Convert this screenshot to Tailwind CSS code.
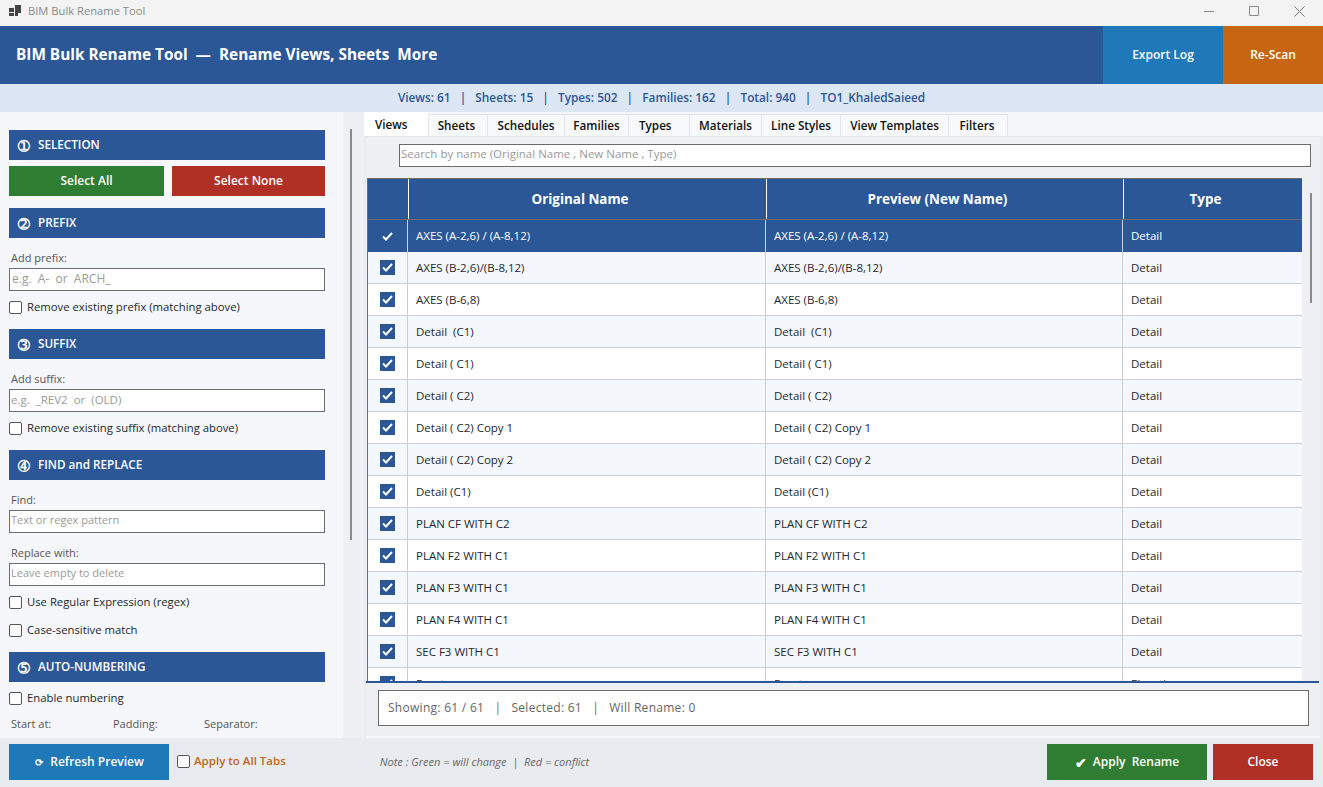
<!DOCTYPE html>
<html>
<head>
<meta charset="utf-8">
<title>BIM Bulk Rename Tool</title>
<script src="https://cdn.jsdelivr.net/npm/@tailwindcss/browser@4"></script>
</head>
<body class="h-screen overflow-hidden bg-[#e8ecf1] font-['Open_Sans',sans-serif] text-[11.5px] text-[#24272d]">
<div class="flex h-[787px] flex-col">

	<!-- title bar -->
	<div class="flex h-[26px] items-center bg-[#f3f3f3] pb-[4px] pl-[9px]">
		<svg width="13" height="12" viewBox="0 0 13 12" class="fill-[#444]"><rect x="0" y="3" width="5" height="4"/><rect x="0" y="8" width="5" height="3"/><rect x="6" y="5" width="3" height="6" /><rect x="6" y="0" width="6" height="8"/></svg>
		<span class="ml-[6px] text-[11.2px] text-[#8a8a8a]">BIM Bulk Rename Tool</span>
		<div class="ml-auto flex items-center gap-[35px] pr-[18px]">
			<div class="h-px w-[10px] bg-[#8a8a8a]"></div>
			<div class="h-[10px] w-[10px] rounded-[1px] border border-[#8a8a8a]"></div>
			<svg width="11" height="11" viewBox="0 0 11 11" class="stroke-[#777]"><path d="M0.5 0.5 L10.5 10.5 M10.5 0.5 L0.5 10.5" fill="none"/></svg>
		</div>
	</div>

	<!-- header -->
	<div class="flex h-[58px] items-stretch bg-[#2b5797] text-white">
		<div class="flex flex-1 items-center pl-4 text-[15.35px] font-bold whitespace-pre">BIM Bulk Rename Tool  —  Rename Views, Sheets  More</div>
		<div class="flex w-[120px] items-center justify-center bg-[#1f78b8] text-[12px] font-semibold">Export Log</div>
		<div class="flex w-[100px] items-center justify-center bg-[#c66512] text-[12px] font-semibold">Re-Scan</div>
	</div>

	<!-- stats -->
	<div class="flex h-7 items-center justify-center bg-[#dde6f5] text-[11.8px] font-semibold whitespace-pre text-[#2b5797]">Views: 61   |   Sheets: 15   |   Types: 502   |   Families: 162   |   Total: 940   |   TO1_KhaledSaieed</div>

	<div class="flex min-h-0 flex-1">
		<!-- left panel -->
		<div class="relative w-[364px] shrink-0 overflow-hidden bg-[#eef0f3]">
			<div class="h-full w-[343px] overflow-hidden bg-[#f5f7fb] pt-[18px] pl-[9px]">
				<div class="flex w-[316px] flex-col">
					<div class="flex h-[30px] items-center gap-[8px] bg-[#2b5797] pl-[9px] text-[11.7px] font-semibold text-white"><span class="text-[14px]">➀</span>SELECTION</div>
					<div class="mt-[6px] flex gap-2">
						<div class="flex h-[30px] w-[155px] items-center justify-center bg-[#2e7d32] text-[12px] font-semibold text-white">Select All</div>
						<div class="flex h-[30px] w-[153px] items-center justify-center bg-[#b03026] text-[12px] font-semibold text-white">Select None</div>
					</div>

					<div class="mt-3 flex h-[30px] items-center gap-[8px] bg-[#2b5797] pl-[9px] text-[11.7px] font-semibold text-white"><span class="text-[14px]">➁</span>PREFIX</div>
					<div class="mt-[13px] h-[17px] pl-[2px] text-[11px] leading-[13px] text-[#555]">Add prefix:</div>
					<div class="flex h-[23px] items-center border border-[#6b6b6b] bg-white pb-[2px] pl-[2px] text-[12px] whitespace-pre text-[#9a9a9a]">e.g.  A-  or  ARCH_</div>
					<label class="mt-[6px] flex h-5 items-center gap-[5px] text-[11.3px]"><span class="h-[13px] w-[13px] rounded-[2px] border border-[#555] bg-white"></span>Remove existing prefix (matching above)</label>

					<div class="mt-3 flex h-[30px] items-center gap-[8px] bg-[#2b5797] pl-[9px] text-[11.7px] font-semibold text-white"><span class="text-[14px]">➂</span>SUFFIX</div>
					<div class="mt-[13px] h-[17px] pl-[2px] text-[11px] leading-[13px] text-[#555]">Add suffix:</div>
					<div class="flex h-[23px] items-center border border-[#6b6b6b] bg-white pb-[2px] pl-[1px] whitespace-pre text-[#9a9a9a]">e.g.  _REV2  or  (OLD)</div>
					<label class="mt-[6px] flex h-5 items-center gap-[5px] text-[11.3px]"><span class="h-[13px] w-[13px] rounded-[2px] border border-[#555] bg-white"></span>Remove existing suffix (matching above)</label>

					<div class="mt-3 flex h-[30px] items-center gap-[8px] bg-[#2b5797] pl-[9px] text-[11.7px] font-semibold text-white"><span class="text-[14px]">➃</span>FIND and REPLACE</div>
					<div class="mt-[13px] h-[17px] pl-[2px] text-[11px] leading-[13px] text-[#555]">Find:</div>
					<div class="flex h-[23px] items-center border border-[#6b6b6b] bg-white pb-[2px] pl-[1px] text-[11px] text-[#9a9a9a]">Text or regex pattern</div>
					<div class="mt-[11px] h-[19px] pl-[2px] text-[11px] leading-[17px] text-[#555]">Replace with:</div>
					<div class="flex h-[23px] items-center border border-[#6b6b6b] bg-white pb-[2px] pl-[1px] text-[11px] text-[#9a9a9a]">Leave empty to delete</div>
					<label class="mt-[6px] flex h-5 items-center gap-[5px] text-[11.3px]"><span class="h-[13px] w-[13px] rounded-[2px] border border-[#555] bg-white"></span>Use Regular Expression (regex)</label>
					<label class="mt-2 flex h-5 items-center gap-[5px] text-[11.3px]"><span class="h-[13px] w-[13px] rounded-[2px] border border-[#555] bg-white"></span>Case-sensitive match</label>

					<div class="mt-3 flex h-[30px] items-center gap-[8px] bg-[#2b5797] pl-[9px] text-[11.7px] font-semibold text-white"><span class="text-[14px]">➄</span>AUTO-NUMBERING</div>
					<label class="mt-[6px] flex h-5 items-center gap-[5px] text-[11.3px]"><span class="h-[13px] w-[13px] rounded-[2px] border border-[#555] bg-white"></span>Enable numbering</label>
					<div class="mt-2 flex text-[11px] text-[#555]">
						<span class="w-[104px] pl-[2px]">Start at:</span>
						<span class="w-[91px]">Padding:</span>
						<span>Separator:</span>
					</div>
				</div>
			</div>
			<div class="absolute top-[17px] left-[350px] h-[411px] w-[2px] bg-[#8a8a8a]"></div>
		</div>

		<!-- right panel -->
		<div class="flex min-w-0 flex-1 flex-col">
			<!-- tabs -->
			<div class="flex h-6 items-end bg-[#f5f7fb] text-[11.7px] font-semibold text-[#111]">
				<div class="flex h-6 w-[64px] items-start bg-white pt-[4px] pl-[11px]">Views</div>
				<div class="flex h-[22px] w-[60px] items-center justify-center border border-b-0 border-[#e2e5ea] bg-[#f8f9fb] pr-[3px]">Sheets</div>
				<div class="flex h-[22px] w-[77px] items-center justify-center border-y border-r border-b-0 border-[#e2e5ea] bg-[#f8f9fb]">Schedules</div>
				<div class="flex h-[22px] w-[64px] items-center justify-center border-y border-r border-b-0 border-[#e2e5ea] bg-[#f8f9fb]">Families</div>
				<div class="flex h-[22px] w-[61px] items-center border-y border-r border-b-0 border-[#e2e5ea] bg-[#f8f9fb] pl-[10px]">Types</div>
				<div class="flex h-[22px] w-[72px] items-center justify-center border-y border-r border-b-0 border-[#e2e5ea] bg-[#f8f9fb]">Materials</div>
				<div class="flex h-[22px] w-[79px] items-center justify-center border-y border-r border-b-0 border-[#e2e5ea] bg-[#f8f9fb]">Line Styles</div>
				<div class="flex h-[22px] w-[108px] items-center justify-center border-y border-r border-b-0 border-[#e2e5ea] bg-[#f8f9fb]">View Templates</div>
				<div class="flex h-[22px] w-[59px] items-center justify-center border-y border-r border-b-0 border-[#e2e5ea] bg-[#f8f9fb] pr-[2px]">Filters</div>
			</div>

			<!-- tab body -->
			<div class="relative mr-[3px] ml-[2px] flex min-h-0 flex-1 flex-col border-t border-[#e2e5ea] bg-[#eef0f3]">
				<div class="mt-[7px] ml-[33px] flex h-[23px] w-[912px] shrink-0 items-center border border-[#6b6b6b] bg-white pb-[3px] pl-[1px] text-[#9a9a9a]">Search by name (Original Name , New Name , Type)</div>

				<!-- table -->
				<div class="mt-[11px] ml-[1px] h-[503px] w-[935px] shrink-0 overflow-hidden border-t border-l border-[#6b6b6b] bg-white">
					<div class="grid h-[41px] grid-cols-[41px_358px_357px_1fr] border-b border-[#6b6b6b] bg-[#2b5797] text-[13.4px] font-bold text-white">
						<div class="border-r border-white"></div>
						<div class="flex items-center justify-center border-r border-white pr-[15px]">Original Name</div>
						<div class="flex items-center justify-center border-r border-white pr-[15px]">Preview (New Name)</div>
						<div class="flex items-center justify-center pr-[15px]">Type</div>
					</div>
					<div class="grid h-[32px] grid-cols-[40px_358px_357px_1fr] bg-[#2b5797] text-white">
						<div class="flex items-center justify-center border-r border-[#c9d3e3]"><svg width="11" height="9" viewBox="0 0 11 9" fill="none" stroke="white" stroke-width="2"><path d="M1 4.5 L4 7.5 L10 1"/></svg></div>
						<div class="flex items-center border-r border-[#c9d3e3] pl-2">AXES (A-2,6) / (A-8,12)</div>
						<div class="flex items-center border-r border-[#c9d3e3] pl-2">AXES (A-2,6) / (A-8,12)</div>
						<div class="flex items-center pl-2">Detail</div>
					</div>
					<div id="rows"></div>
				</div>

				<div class="absolute top-[56px] right-[8px] h-[110px] w-[2px] bg-[#8a8a8a]"></div>
				<div class="h-[2px] w-[953px] shrink-0 bg-[#2b5797]"></div>

				<!-- status -->
				<div class="mt-[7px] ml-[12px] flex h-[36px] w-[931px] shrink-0 items-center border border-[#6b6b6b] bg-white pl-[9px] text-[12px] tracking-[0.28px] whitespace-pre text-[#666]">Showing: 61 / 61   |   Selected: 61   |   Will Rename: 0</div>
				<div class="mt-auto h-[2px] w-full bg-[#f5f7fb]"></div>
			</div>
		</div>
	</div>

	<!-- footer -->
	<div class="flex h-[49px] shrink-0 items-start bg-[#e8ecf1] pt-[6px] pr-[10px] pl-[9px]">
		<div class="flex h-9 w-40 items-center justify-center gap-[7px] bg-[#1f78b8] pl-[1px] text-[12px] font-semibold text-white"><span class="text-[10px]">⟳</span>Refresh Preview</div>
		<span class="mt-[11px] ml-2 h-[13px] w-[13px] rounded-[2px] border border-[#555] bg-white"></span>
		<span class="mt-[8px] ml-1 text-[11.5px] font-semibold text-[#c66512]">Apply to All Tabs</span>
		<span class="mt-[10px] ml-[94px] text-[11px] whitespace-pre text-[#666] italic">Note : Green = will change  |  Red = conflict</span>
		<div class="ml-auto flex h-9 w-40 items-center justify-center gap-[6px] bg-[#2e7d32] text-[12px] font-semibold whitespace-pre text-white"><span class="text-[14px]">✔</span>Apply  Rename</div>
		<div class="ml-[6px] flex h-9 w-[100px] items-center justify-center bg-[#b03026] text-[12px] font-semibold text-white">Close</div>
	</div>
</div>

<script>
	var names = ["AXES (B-2,6)/(B-8,12)", "AXES (B-6,8)", "Detail  (C1)", "Detail ( C1)", "Detail ( C2)", "Detail ( C2) Copy 1", "Detail ( C2) Copy 2", "Detail (C1)", "PLAN CF WITH C2", "PLAN F2 WITH C1", "PLAN F3 WITH C1", "PLAN F4 WITH C1", "SEC F3 WITH C1", "Front"];
	var html = "";
	for (var i = 0; i < names.length; i++) {
		var even = i % 2 == 0;
		var type = i == 13 ? "Elevation" : "Detail";
		html += '<div class="grid h-[32px] grid-cols-[40px_358px_357px_1fr] border-b border-[#c9ced6] whitespace-pre ' + (even ? 'bg-[#f4f7fb]' : 'bg-white') + '">'
			+ '<div class="flex items-center justify-center border-r border-[#c9ced6]"><span class="flex h-[15px] w-[15px] items-center justify-center bg-[#2b5797]"><svg width="11" height="9" viewBox="0 0 11 9" fill="none" stroke="white" stroke-width="2"><path d="M1 4.5 L4 7.5 L10 1"/></svg></span></div>'
			+ '<div class="flex items-center border-r border-[#c9ced6] pl-2">' + names[i] + '</div>'
			+ '<div class="flex items-center border-r border-[#c9ced6] pl-2">' + names[i] + '</div>'
			+ '<div class="flex items-center pl-2">' + type + '</div></div>';
	}
	document.getElementById("rows").innerHTML = html;
</script>
</body>
</html>
